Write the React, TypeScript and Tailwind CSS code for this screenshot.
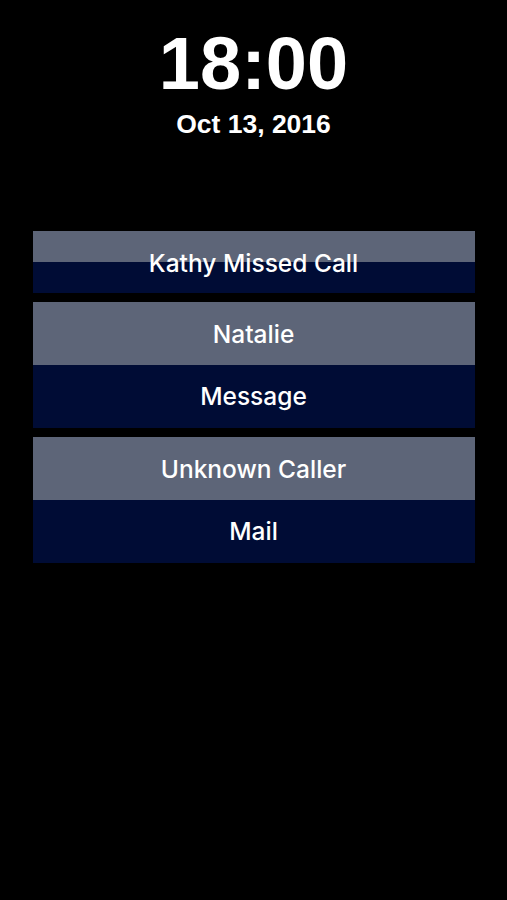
const cardFont = {fontFamily: 'Inter, "Noto Sans", sans-serif'}

function Row({label, tone}: {label: string; tone: 'top' | 'bottom'}) {
  return (
    <div
      className={`h-[63px] flex items-center justify-center text-white text-[24.5px] font-medium ${tone === 'top' ? 'bg-[#5d6578] pt-[3px]' : 'bg-[#000c35]'}`}
      style={cardFont}
    >
      {label}
    </div>
  )
}

function MissedCall() {
  return (
    <div className="relative h-[62px] flex flex-col">
      <div className="h-[31px] bg-[#5d6578]" />
      <div className="h-[31px] bg-[#000c35]" />
      <div
        className="absolute inset-0 pt-[4px] flex items-center justify-center text-white text-[24.5px] font-medium"
        style={cardFont}
      >
        Kathy Missed Call
      </div>
    </div>
  )
}

export default function App() {
  return (
    <div className="min-h-screen bg-black pt-[27px] flex flex-col items-center">
      {/* Clock */}
      <div
        className="text-white font-bold text-[74px] leading-none"
        style={{fontFamily: '"Liberation Sans", Arial, sans-serif'}}
      >
        18:00
      </div>
      <div
        className="mt-[10px] text-white font-bold text-[26.5px] leading-none"
        style={{fontFamily: '"Liberation Sans", Arial, sans-serif'}}
      >
        Oct 13, 2016
      </div>

      {/* Notifications */}
      <div className="mt-[93px] w-[442px] flex flex-col gap-[9px]">
        <MissedCall />
        <div className="flex flex-col">
          <Row label="Natalie" tone="top" />
          <Row label="Message" tone="bottom" />
        </div>
        <div className="flex flex-col">
          <Row label="Unknown Caller" tone="top" />
          <Row label="Mail" tone="bottom" />
        </div>
      </div>
    </div>
  )
}
